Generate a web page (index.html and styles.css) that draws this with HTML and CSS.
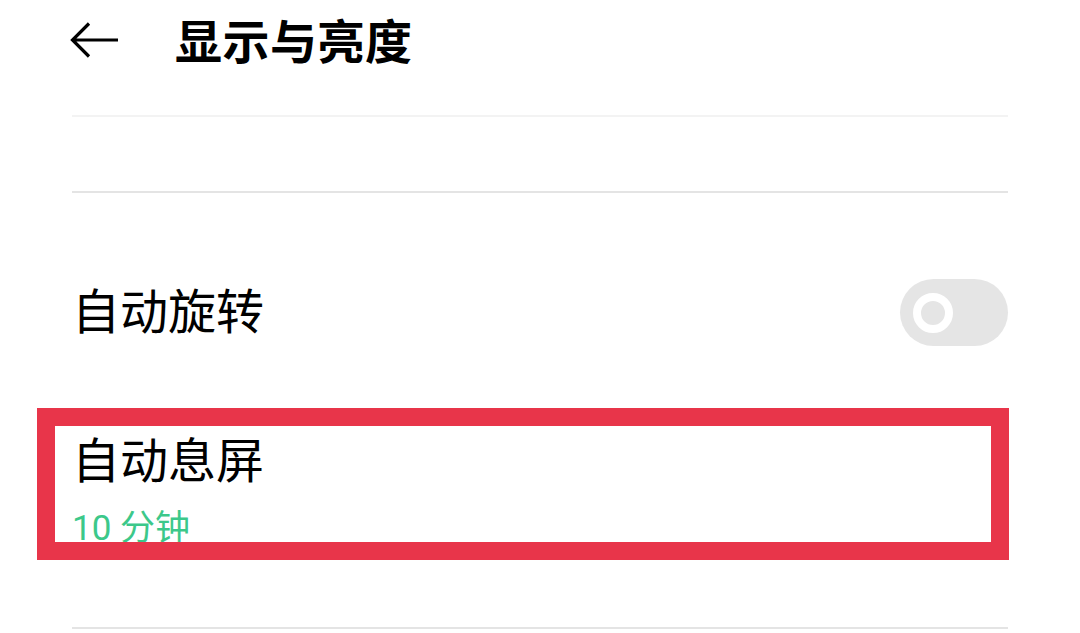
FILE: index.html
```html
<!DOCTYPE html>
<html lang="zh-CN">
<head>
<meta charset="utf-8">
<title>显示与亮度</title>
<link rel="stylesheet" href="styles.css">
</head>
<body>
<div class="screen">
  <header class="topbar">
    <svg class="back" width="48" height="36" viewBox="0 0 48 36" aria-hidden="true">
      <path d="M2.5 18 H48 M19 1.5 L2.5 18 L19 34.5" fill="none" stroke="#000" stroke-width="3.2" stroke-linejoin="miter"/>
    </svg>
    <h1 class="title">显示与亮度</h1>
  </header>
  <div class="list">
    <div class="divider divider-light"></div>
    <div class="blank"></div>
    <div class="divider"></div>
    <div class="row row-switch">
      <span class="row-label">自动旋转</span>
      <div class="switch"><div class="knob"></div></div>
    </div>
    <div class="row row-detail">
      <span class="row-label">自动息屏</span>
      <span class="row-value">10 分钟</span>
      <div class="highlight"></div>
    </div>
    <div class="divider"></div>
  </div>
</div>
</body>
</html>
```

FILE: styles.css
```css
html, body {
  margin: 0;
  padding: 0;
  background: #ffffff;
}

body {
  width: 1080px;
  height: 633px;
  overflow: hidden;
  font-family: "Noto Sans CJK SC", "Noto Sans", sans-serif;
  color: #000;
}

.topbar {
  height: 80px;
  display: flex;
  align-items: center;
  padding-left: 70px;
}

.back {
  display: block;
  flex: none;
}

.title {
  margin: 0 0 0 57px;
  padding-bottom: 2px;
  font-size: 47px;
  font-weight: 700;
  line-height: 62px;
  letter-spacing: 0.5px;
}

.list {
  margin: 35px 72px 0 72px;
  display: flex;
  flex-direction: column;
}

.divider {
  height: 2px;
  background: #e4e4e4;
}

.divider-light {
  background: #f3f3f3;
}

.blank {
  height: 74px;
}

.row-label {
  font-size: 48px;
  line-height: 62px;
}

.row-switch {
  display: flex;
  align-items: center;
  justify-content: space-between;
  margin-top: 86px;
  height: 67px;
}

.row-switch .row-label {
  padding-bottom: 10px;
}

.switch {
  width: 108px;
  height: 67px;
  border-radius: 34px;
  background: #e5e5e5;
  display: flex;
  align-items: center;
}

.knob {
  width: 40px;
  height: 40px;
  box-sizing: border-box;
  margin-left: 13px;
  border-radius: 50%;
  border: 8.5px solid #ffffff;
  background: #e5e5e5;
}

.row-detail {
  position: relative;
  display: flex;
  flex-direction: column;
  margin-top: 80px;
  margin-bottom: 78px;
}

.row-value {
  margin-top: 21px;
  font-family: Roboto, "Noto Sans CJK SC", sans-serif;
  font-size: 35px;
  line-height: 40px;
  color: #3cc88a;
}

.highlight {
  position: absolute;
  left: -35px;
  top: -18px;
  width: 972px;
  height: 152px;
  box-sizing: border-box;
  border: 18px solid #e8354a;
}
```
